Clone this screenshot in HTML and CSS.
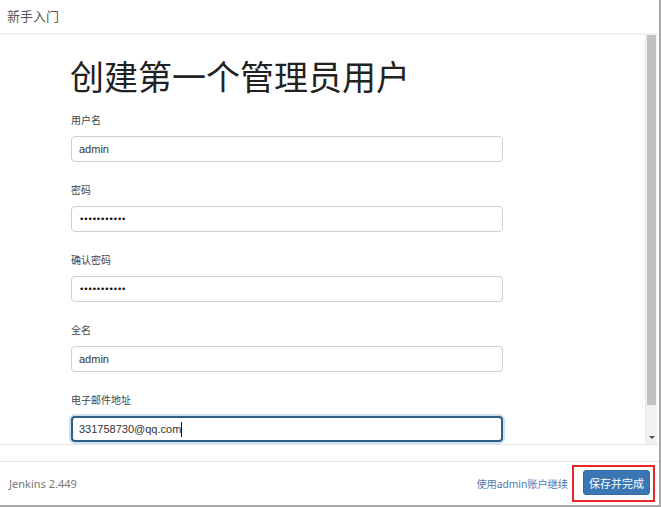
FILE: index.html
```html
<!DOCTYPE html>
<html lang="zh-CN">
<head>
    <meta charset="UTF-8">
    <title>新手入门</title>
    <link rel="stylesheet" href="styles.css">
</head>
<body>
    <div class="wizard">
        <div class="wizard-header">新手入门</div>

        <div class="wizard-body">
            <div class="content">
                <h1>创建第一个管理员用户</h1>
                <form class="user-form">
                    <div class="field">
                        <label for="username">用户名</label>
                        <input type="text" id="username" value="admin">
                    </div>
                    <div class="field">
                        <label for="password1">密码</label>
                        <input type="password" id="password1" value="12345678901">
                    </div>
                    <div class="field">
                        <label for="password2">确认密码</label>
                        <input type="password" id="password2" value="12345678901">
                    </div>
                    <div class="field">
                        <label for="fullname">全名</label>
                        <input type="text" id="fullname" value="admin">
                    </div>
                    <div class="field">
                        <label for="email">电子邮件地址</label>
                        <div class="input-wrap">
                            <input type="text" id="email" class="focused" value="331758730@qq.com">
                            <!-- mirror text so the caret sits right after the value -->
                            <span class="caret-mirror">331758730@qq.com</span>
                        </div>
                    </div>
                </form>
            </div>
            <div class="scrollbar">
                <div class="thumb"></div>
                <div class="arrow-down"></div>
            </div>
        </div>

        <div class="spacer"></div>

        <div class="wizard-footer">
            <span class="version">Jenkins 2.449</span>
            <div class="actions">
                <a href="#" class="skip-link">使用admin账户继续</a>
                <span class="highlight">
                    <button type="button" class="btn-primary">保存并完成</button>
                </span>
            </div>
        </div>
    </div>
</body>
</html>
```

FILE: styles.css
```css
/* Reset */
* {
    margin: 0;
    padding: 0;
    box-sizing: border-box;
}

body {
    font-family: "Noto Sans", "Noto Sans CJK SC", sans-serif;
    background-color: #fff;
    color: #333;
    width: 661px;
    height: 507px;
    overflow: hidden;
}

/* Wizard frame */
.wizard {
    display: flex;
    flex-direction: column;
    height: 507px;
    border-right: 2px solid #a8a8a8;
    border-bottom: 2px solid #a8a8a8;
}

.wizard-header {
    height: 35px;
    line-height: 33px;
    padding-left: 7px;
    font-size: 13px;
    color: #555;
    border-bottom: 2px solid #f0f0f0;
}

/* Scrolling body */
.wizard-body {
    display: flex;
    height: 410px;
    border-bottom: 1px solid #e6e6e6;
}

.content {
    flex: 1;
    overflow: hidden;
    padding: 19px 0 0 71px;
}

h1 {
    font-family: "Noto Sans CJK SC", sans-serif;
    font-size: 34px;
    font-weight: normal;
    line-height: 44px;
    color: #222;
    margin-left: -1px;
    margin-bottom: 14px;
}

.user-form {
    display: flex;
    flex-direction: column;
    gap: 20px;
}

.field {
    display: flex;
    flex-direction: column;
    gap: 7px;
}

label {
    font-size: 10px;
    line-height: 17px;
    color: #444;
}

input {
    width: 432px;
    height: 26px;
    padding: 0 7px;
    font-family: "Liberation Sans", "Noto Sans CJK SC", sans-serif;
    font-size: 11px;
    color: #333;
    border: 1px solid #c9cfd4;
    border-radius: 4px;
    background-color: #fff;
    outline: none;
}

input[type="password"] {
    font-family: "DejaVu Sans", sans-serif;
    font-size: 9px;
    letter-spacing: -1.1px;
    color: #111;
}

.input-wrap {
    position: relative;
    width: 432px;
}

input.focused {
    border: 2px solid #2f5f87;
    padding-left: 6px;
    box-shadow: 0 0 0 2px #cfe0ee;
}

.caret-mirror {
    position: absolute;
    left: 8px;
    top: 6px;
    height: 15px;
    font-family: "Liberation Sans", sans-serif;
    font-size: 11px;
    line-height: 15px;
    color: transparent;
    border-right: 1px solid #111;
    pointer-events: none;
}

/* Fake scrollbar */
.scrollbar {
    width: 12px;
    margin-right: 2px;
    border-left: 1px solid #e9e9e9;
    background-color: #f1f1f1;
    display: flex;
    flex-direction: column;
    justify-content: space-between;
}

.thumb {
    margin-left: 1px;
    width: 9px;
    height: 370px;
    background-color: #c1c1c1;
}

.arrow-down {
    align-self: center;
    margin-bottom: 5px;
    width: 0;
    height: 0;
    border-left: 3px solid transparent;
    border-right: 3px solid transparent;
    border-top: 3px solid #505050;
}

.spacer {
    height: 17px;
    border-bottom: 1px solid #e6e6e6;
}

/* Footer */
.wizard-footer {
    flex: 1;
    display: flex;
    align-items: center;
    justify-content: space-between;
    padding-left: 9px;
    padding-right: 4px;
}

.version {
    font-size: 11px;
    color: #777;
}

.actions {
    display: flex;
    align-items: center;
    gap: 4px;
}

.skip-link {
    font-size: 10.2px;
    color: #4a7db3;
    text-decoration: none;
}

.highlight {
    display: block;
    border: 2px solid #e8262b;
    padding: 3px 3px 5px 9px;
}

.btn-primary {
    display: block;
    width: 67px;
    height: 25px;
    font-family: "Noto Sans CJK SC", sans-serif;
    font-size: 11px;
    color: #fff;
    background-color: #3a76b4;
    border: 1px solid #2e6aa6;
    border-radius: 3px;
}
```
